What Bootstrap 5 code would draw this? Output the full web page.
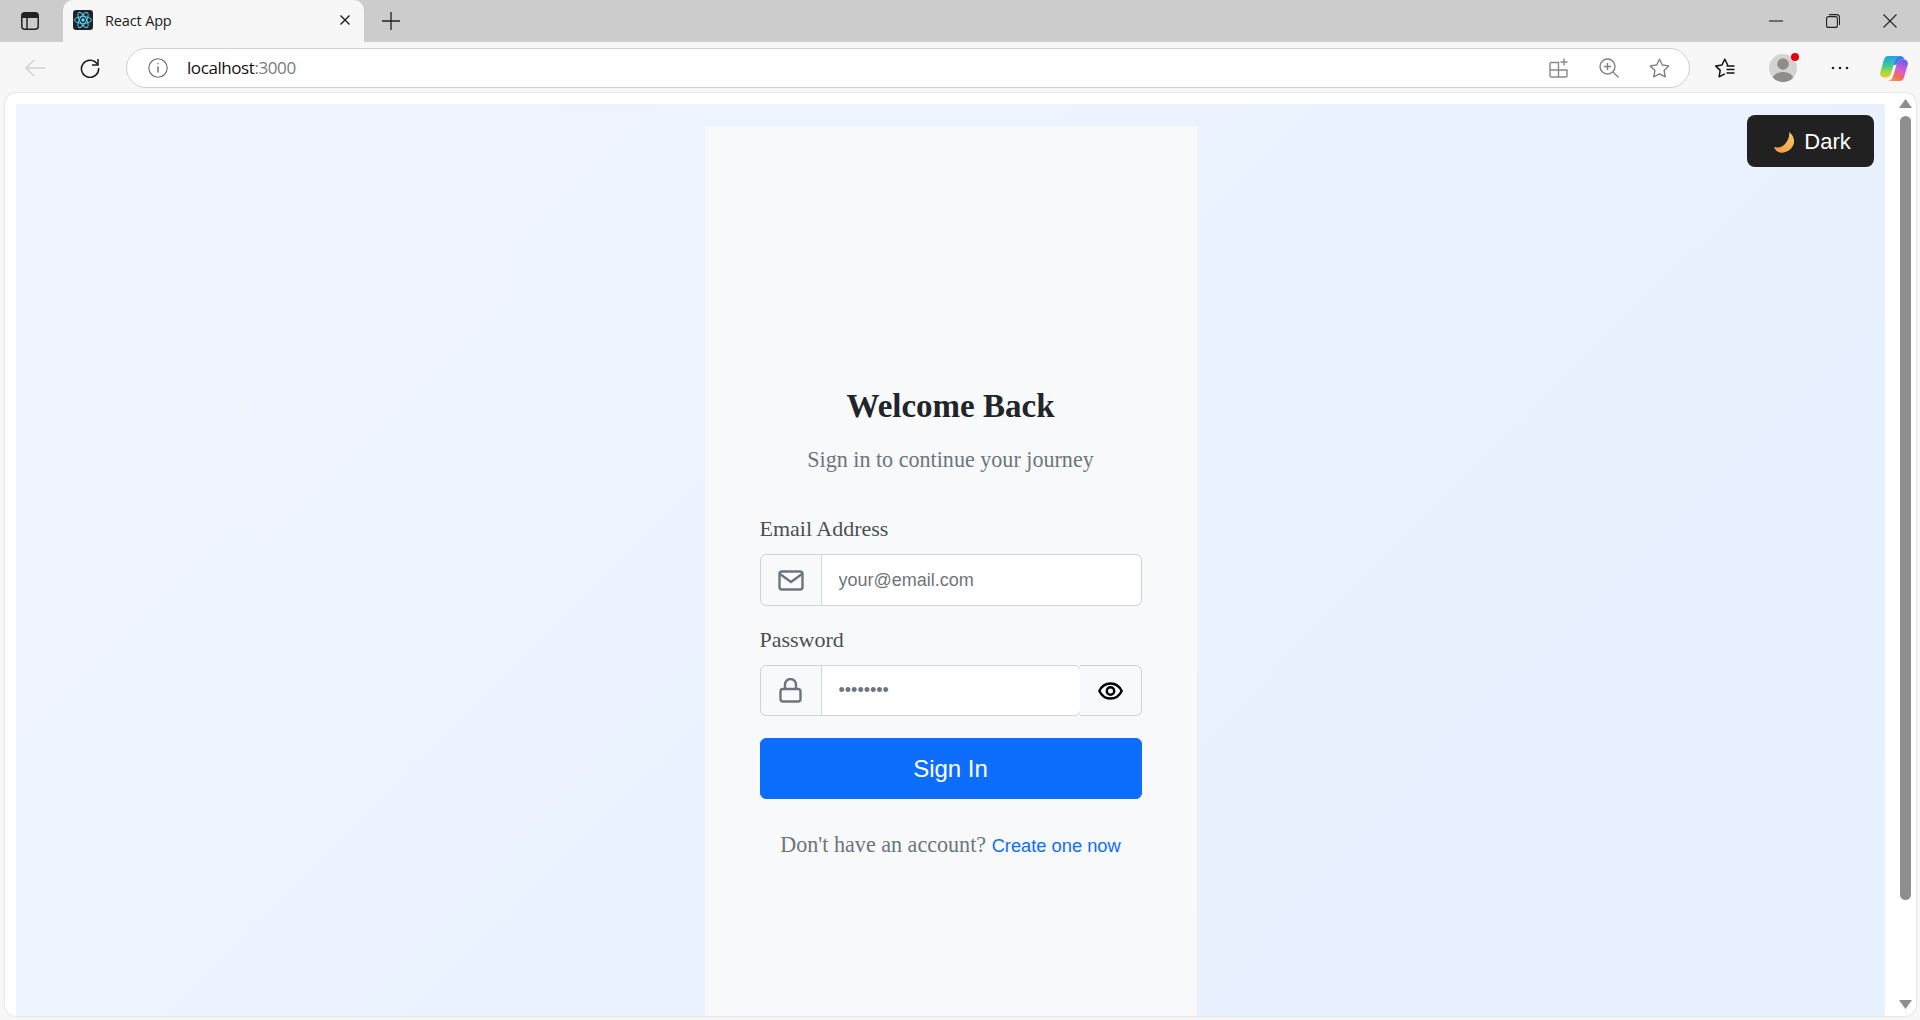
<!DOCTYPE html>
<html lang="en">
<head>
  <meta charset="UTF-8">
  <meta name="viewport" content="width=device-width, initial-scale=1.0">
  <title>React App</title>
  <link href="https://cdn.jsdelivr.net/npm/bootstrap@5.3.0/dist/css/bootstrap.min.css" rel="stylesheet">
  <style>
    html, body { height: 100%; overflow: hidden; }
    body { background: #f7f7f7; font-family: "Liberation Serif", "Times New Roman", serif; color: #212529; }
    .browser-frame { height: 1020px; }
    .tab-strip { height: 42px; background: #cccccc; padding-left: 63px; flex: none; }
    .sidebar-toggle { width: 63px; height: 42px; margin-left: -63px; padding-left: 21px; }
    .page-tab { width: 301px; height: 42px; background: #f7f7f7; border-radius: 10px 10px 0 0; padding: 0 13px 2px 10px; font: 14.5px "Open Sans", sans-serif; color: #1a1a1a; }
    .tab-title { margin-left: 12px; letter-spacing: -.15px; }
    .new-tab { margin-left: 18px; }
    .window-buttons { gap: 43px; padding-right: 23px; }
    .tool-row { height: 51px; padding: 6px 0 5px 25px; flex: none; }
    .reload-btn { margin-left: 35px; }
    .address-bar { width: 1564px; height: 40px; margin-left: 26px; background: #fff; border: 1.5px solid #cfcfcf; border-radius: 20px; padding: 0 19px 0 21px; }
    .address-text { margin-left: 19px; padding-bottom: 2px; font: 17px "Open Sans", sans-serif; letter-spacing: -.42px; color: #111; }
    .address-port { color: #7a7a7a; }
    .address-tools { gap: 30px; }
    .right-tools { margin-left: 24px; }
    .profile-wrap { width: 30px; height: 30px; margin-left: 33px; }
    .profile-dot { position: absolute; top: 0; right: -1px; width: 8px; height: 8px; background: #e60012; border-radius: 50%; }
    .more-dots { margin-left: 33px; }
    .copilot-logo { margin-left: 31px; }
    .view-port { flex: 1; margin: 0 4px 4px 5px; background: #fff; border-radius: 11px; box-shadow: 0 0 2px rgba(0,0,0,.22); padding: 11px 0 0 11px; min-height: 0; overflow: hidden; }
    .app-page { width: 1869px; background: linear-gradient(135deg, #f0f4ff 0%, #e6f0ff 100%); padding-top: 22px; position: relative; }
    .login-panel { width: 492px; background: #f8f9fa; padding: 259px 55px 0; }
    .panel-title { font-size: 33px; font-weight: 700; line-height: 43px; margin: 0 0 18px; }
    .panel-sub { font-size: 22.1px; line-height: 27px; color: #6c757d; margin-bottom: 43px; }
    .field-label { font-size: 22px; line-height: 26px; color: #495057; margin-bottom: 12px; }
    .field-block { margin-bottom: 21px; }
    .login-panel .input-group-text { width: 62px; justify-content: center; background: #f8f9fa; border-color: #ced4da; padding: 0; }
    .login-panel .form-control { height: 52px; font: 18px "Liberation Sans", Arial, sans-serif; padding: 0 17px; border-color: #ced4da; }
    .login-panel .form-control::placeholder { color: #6c757d; opacity: 1; }
    .login-panel .pw-input.form-control { height: 51px; border-radius: 0 6px 6px 0 !important; }
    .eye-btn { width: 62px; padding: 0; background: #f8f9fa; border: 1px solid #ced4da; border-left: 0; }
    .sign-btn { height: 61px; font: 24px "Liberation Sans", Arial, sans-serif; margin-top: 22px; border-radius: 6px; }
    .signup-line { font-size: 22.1px; line-height: 27px; color: #6c757d; margin-top: 32px; }
    .signup-line a { font: 18.3px "Liberation Sans", Arial, sans-serif; color: #0d6efd; text-decoration: none; }
    .theme-toggle { position: absolute; top: 11px; right: 11px; width: 127px; height: 52px; padding: 2px 0 0 4px; background: #212121; color: #fff; border-radius: 8px; font: 22px "Liberation Sans", Arial, sans-serif; gap: 10px; }
    .scroll-track { width: 20px; margin: -11px 0 0 10px; padding-bottom: 7px; position: relative; }
    .scroll-up { margin-top: 6px; }
    .scroll-thumb { width: 11px; height: 784px; background: #8e8e8e; border-radius: 6px; margin-top: 8px; }
  </style>
</head>
<body>
  <div class="browser-frame d-flex flex-column">
    <!-- tab strip -->
    <div class="tab-strip d-flex align-items-center">
      <div class="sidebar-toggle d-flex align-items-center">
        <svg width="18" height="18" viewBox="0 0 18 18" fill="none" stroke="#222" stroke-width="1.5"><rect x=".8" y=".8" width="16.4" height="16.4" rx="3"/><path d="M1 5.2h16M6 5.2V17"/><rect x="1" y="1" width="16" height="4" fill="#222" stroke="none"/></svg>
      </div>
      <div class="page-tab d-flex align-items-center">
        <svg width="20" height="20" viewBox="0 0 20 20"><rect width="20" height="20" rx="3" fill="#20232a"/><g fill="none" stroke="#61dafb" stroke-width=".9"><ellipse cx="10" cy="10" rx="8.5" ry="3.4"/><ellipse cx="10" cy="10" rx="8.5" ry="3.4" transform="rotate(60 10 10)"/><ellipse cx="10" cy="10" rx="8.5" ry="3.4" transform="rotate(120 10 10)"/></g><circle cx="10" cy="10" r="1.7" fill="#61dafb"/></svg>
        <span class="tab-title">React App</span>
        <svg class="ms-auto" width="12" height="12" viewBox="0 0 12 12" stroke="#1a1a1a" stroke-width="1.4"><path d="M1.5 1.5l9 9M10.5 1.5l-9 9"/></svg>
      </div>
      <svg class="new-tab" width="18" height="18" viewBox="0 0 18 18" stroke="#222" stroke-width="1.3"><path d="M9 0v18M0 9h18"/></svg>
      <div class="window-buttons d-flex align-items-center ms-auto">
        <svg width="14" height="14" viewBox="0 0 14 14" stroke="#222" stroke-width="1.1"><path d="M0 7h14"/></svg>
        <svg width="14" height="14" viewBox="0 0 14 14" fill="none" stroke="#222" stroke-width="1.1"><rect x=".6" y="2.6" width="10.8" height="10.8" rx="2"/><path d="M3 .6h7.5a3 3 0 0 1 3 3V11"/></svg>
        <svg width="14" height="14" viewBox="0 0 14 14" stroke="#222" stroke-width="1.1"><path d="M.5.5l13 13M13.5.5l-13 13"/></svg>
      </div>
    </div>

    <!-- toolbar -->
    <div class="tool-row d-flex align-items-center">
      <svg width="20" height="18" viewBox="0 0 20 18" fill="none" stroke="#cfcfcf" stroke-width="1.4"><path d="M20 9H1M9 1L1 9l8 8"/></svg>
      <svg class="reload-btn" width="20" height="20" viewBox="0 0 20 20" fill="none" stroke="#1a1a1a" stroke-width="1.5"><path d="M17.5 6.5A8.6 8.6 0 1 0 18.6 10"/><path d="M18 1v6h-6"/></svg>
      <div class="address-bar d-flex align-items-center">
        <svg width="20" height="20" viewBox="0 0 20 20" fill="none" stroke="#6b6b6b" stroke-width="1.1"><circle cx="10" cy="10" r="9.2"/><path d="M10 8.6v6" stroke-width="1.4"/><circle cx="10" cy="5.8" r=".8" fill="#6b6b6b" stroke="none"/></svg>
        <span class="address-text">localhost<span class="address-port">:3000</span></span>
        <div class="address-tools d-flex align-items-center ms-auto">
          <svg width="20" height="20" viewBox="0 0 20 20" fill="none" stroke="#8a8a8a" stroke-width="1.4"><path d="M1 5.5a1 1 0 0 1 1-1h7.5V12H1zM9.5 12H18v6a1 1 0 0 1-1 1H9.5zM1 12h8.5v7H2a1 1 0 0 1-1-1z"/><path d="M15 .5v7M11.5 4h7"/></svg>
          <svg width="20" height="20" viewBox="0 0 20 20" fill="none" stroke="#808080" stroke-width="1.4"><circle cx="8.5" cy="8.5" r="7.5"/><path d="M14 14l5.5 5.5M8.5 5v7M5 8.5h7"/></svg>
          <svg width="21" height="20" viewBox="0 0 21 20" fill="none" stroke="#808080" stroke-width="1.4"><path d="M10.5 1.2l2.8 5.8 6.4.9-4.6 4.5 1.1 6.4-5.7-3-5.7 3 1.1-6.4L1.3 7.9l6.4-.9z" stroke-linejoin="round"/></svg>
        </div>
      </div>
      <div class="right-tools d-flex align-items-center">
        <svg width="21" height="20" viewBox="0 0 21 20" fill="none" stroke="#111" stroke-width="1.5"><path d="M14 7.2l-.3-.2-3-5.8L8 7l-6.4.9 4.6 4.5-1.1 6.4 5.7-3" stroke-linejoin="round"/><path d="M12.5 8h8M12.5 11.5h8M12.5 15h8" stroke-width="1.3"/></svg>
        <div class="profile-wrap position-relative">
          <svg width="30" height="30" viewBox="0 0 30 30"><clipPath id="pfClip"><circle cx="15" cy="15" r="14"/></clipPath><circle cx="15" cy="15" r="14" fill="#d4d3d2"/><g clip-path="url(#pfClip)" fill="#8f8c8a"><circle cx="15" cy="11" r="5.8"/><ellipse cx="15" cy="26" rx="10.5" ry="7"/></g></svg>
          <span class="profile-dot"></span>
        </div>
        <svg class="more-dots" width="18" height="4" viewBox="0 0 18 4" fill="#222"><circle cx="2" cy="2" r="1.3"/><circle cx="9" cy="2" r="1.3"/><circle cx="16" cy="2" r="1.3"/></svg>
        <svg class="copilot-logo" width="28" height="27" viewBox="0 0 28 27">
          <defs>
            <linearGradient id="cpA" x1="0" y1="0" x2="0" y2="1"><stop offset="0" stop-color="#1f9ff0"/><stop offset=".45" stop-color="#3ecb8f"/><stop offset=".75" stop-color="#a8d840"/><stop offset="1" stop-color="#f9c820"/></linearGradient>
            <linearGradient id="cpB" x1=".7" y1="0" x2=".3" y2="1"><stop offset="0" stop-color="#6a5cf0"/><stop offset=".45" stop-color="#d95ccc"/><stop offset=".8" stop-color="#f2704f"/><stop offset="1" stop-color="#f58f6a"/></linearGradient>
          </defs>
          <path d="M8 1h12c-3 .5-4.500 3-5.500 6l-3 10.500C10.500 21 9 22.500 6.500 22.500H4C1.200 22.500-.5 20 .3 17.200L4 4.500C4.700 2.200 6 1 8 1z" fill="url(#cpA)"/>
          <path d="M20 26H8c3-.5 4.500-3 5.500-6l3-10.500C17.500 6 19 4.500 21.500 4.500H24c2.800 0 4.500 2.500 3.700 5.300L24 22.500C23.300 24.800 22 26 20 26z" fill="url(#cpB)"/>
          <path d="M20 1c-3 .5-4.500 3-5.500 6l-.9 3.200 2.900-.7c1-3.500 2.500-5 5-5h3.200C23.500 2 22 1 20 1z" fill="#2a7cf0"/>
        </svg>
      </div>
    </div>

    <!-- page area -->
    <div class="view-port d-flex">
      <div class="app-page d-flex justify-content-center">
        <div class="login-panel">
          <h1 class="panel-title text-center">Welcome Back</h1>
          <p class="panel-sub text-center">Sign in to continue your journey</p>
          <form>
            <div class="field-block">
              <label class="field-label d-block" for="email">Email Address</label>
              <div class="input-group">
                <span class="input-group-text">
                  <svg width="26" height="21" viewBox="0 0 26 21" fill="none" stroke="#6c757d" stroke-width="2.400"><rect x="1.500" y="1.500" width="23" height="18" rx="2.500"/><path d="M2 4l11 8 11-8"/></svg>
                </span>
                <input id="email" type="email" class="form-control" placeholder="your@email.com">
              </div>
            </div>
            <div>
              <label class="field-label d-block" for="password">Password</label>
              <div class="input-group">
                <span class="input-group-text">
                  <svg width="23" height="25" viewBox="0 0 23 25" fill="none" stroke="#6c757d" stroke-width="2.400"><rect x="1.500" y="11" width="20" height="12.500" rx="2.500"/><path d="M6 11V6.500a5.500 5.500 0 0 1 11 0V11"/></svg>
                </span>
                <input id="password" type="text" class="form-control pw-input" placeholder="••••••••">
                <button type="button" class="btn eye-btn d-flex align-items-center justify-content-center">
                  <svg width="25" height="18" viewBox="0 0 25 18" fill="none" stroke="#000" stroke-width="2.400"><path d="M1.300 9C3.500 4.500 7.500 1.500 12.500 1.500S21.500 4.500 23.700 9C21.500 13.500 17.500 16.500 12.500 16.500S3.500 13.500 1.300 9z"/><circle cx="12.500" cy="9" r="3.700"/></svg>
                </button>
              </div>
            </div>
            <button type="submit" class="btn btn-primary sign-btn w-100">Sign In</button>
          </form>
          <p class="signup-line text-center">Don't have an account? <a href="#">Create one now</a></p>
        </div>
        <div class="theme-toggle d-flex align-items-center justify-content-center">
          <svg width="20" height="21" viewBox="0 0 20 21"><defs><linearGradient id="moonFill" x1="1" y1="0" x2="0" y2="1"><stop offset="0" stop-color="#fcc860"/><stop offset="1" stop-color="#f09a48"/></linearGradient></defs><path d="M15 0c4.500 3 6 8 4.500 12.500C17.500 18 11.500 21.500 6 20.500 3 20 1 18 0 15c4 1 8 .5 11-3 3-3.500 5-8 4-12z" fill="url(#moonFill)"/></svg>
          <span>Dark</span>
        </div>
      </div>
      <div class="scroll-track d-flex flex-column align-items-center">
        <svg class="scroll-up" width="13" height="9" viewBox="0 0 13 9" fill="#8e8e8e"><path d="M6.500 0L13 9H0z"/></svg>
        <div class="scroll-thumb"></div>
        <svg class="mt-auto" width="13" height="9" viewBox="0 0 13 9" fill="#8e8e8e"><path d="M6.500 9L13 0H0z"/></svg>
      </div>
    </div>
  </div>
  <script src="https://cdn.jsdelivr.net/npm/bootstrap@5.3.0/dist/js/bootstrap.bundle.min.js"></script>
</body>
</html>
